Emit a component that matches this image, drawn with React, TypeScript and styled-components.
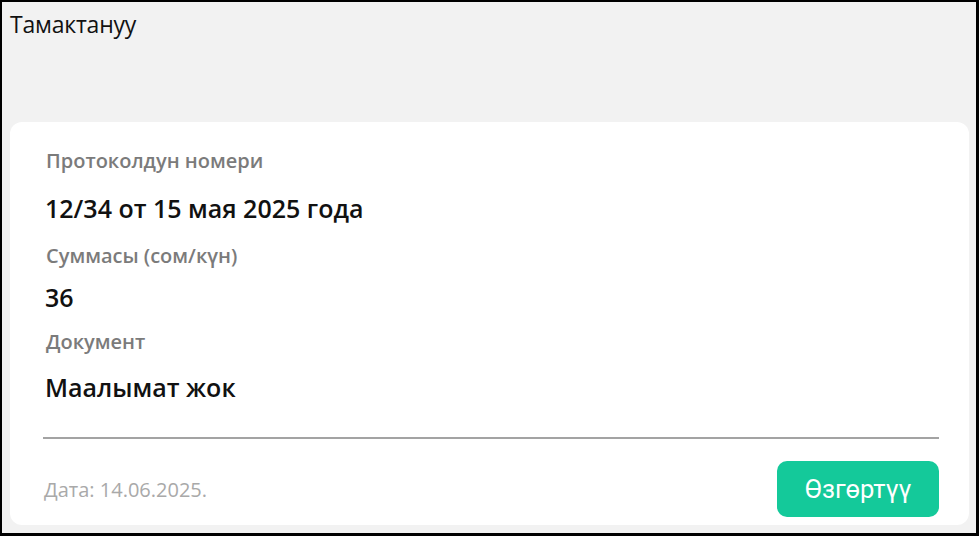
import React from "react";
import styled, { createGlobalStyle } from "styled-components";

const Global = createGlobalStyle`
  html, body { margin: 0; padding: 0; background: #ffffff; }
  * { box-sizing: border-box; }
`;

const Frame = styled.div`
  width: 979px;
  height: 536px;
  background: #f2f2f2;
  border-style: solid;
  border-color: #000;
  border-width: 2px 3px 3px 2px;
  display: flex;
  flex-direction: column;
  padding: 0 7px 0 8px;
  font-family: "Open Sans", "Noto Sans", sans-serif;
`;

const Title = styled.div`
  font-family: "Open Sans", sans-serif;
  font-size: 23px;
  color: #111;
  height: 120px;
  padding-top: 8px;
  line-height: 28px;
  letter-spacing: -0.2px;
`;

const Card = styled.div`
  background: #fff;
  border-radius: 12px;
  padding: 26px 30px 8px 36px;
  display: flex;
  flex-direction: column;
`;

const Label = styled.div<{ $gap: number }>`
  font-family: "Open Sans", sans-serif;
  font-weight: 600;
  font-size: 20px;
  line-height: 26px;
  color: #7b7b7b;
  margin-bottom: ${(p) => p.$gap}px;
`;

const Value = styled.div<{ $gap: number }>`
  font-family: "Open Sans", sans-serif;
  font-weight: 600;
  font-size: 25px;
  line-height: 32px;
  color: #111;
  margin-left: -1px;
  margin-bottom: ${(p) => p.$gap}px;
`;

const Divider = styled.hr`
  border: none;
  height: 2px;
  background: #a3a3a3;
  margin: 0 0 0 -3px;
`;

const Footer = styled.div`
  display: flex;
  justify-content: space-between;
  align-items: center;
  padding-top: 22px;
  margin-left: -2px;
`;

const DateText = styled.span`
  font-family: "Open Sans", sans-serif;
  font-size: 20px;
  color: #a9a9a9;
`;

const Button = styled.button`
  width: 162px;
  height: 56px;
  border: none;
  border-radius: 10px;
  background: #14c99a;
  color: #fff;
  font-family: "Roboto", sans-serif;
  font-size: 25.5px;
  cursor: pointer;
`;

export default function App() {
  return (
    <>
      <Global />
      <Frame>
        <Title>Тамактануу</Title>
        <Card>
          <Label $gap={18}>Протоколдун номери</Label>
          <Value $gap={19}>12/34 от 15 мая 2025 года</Value>
          <Label $gap={12}>Суммасы (сом/күн)</Label>
          <Value $gap={16}>36</Value>
          <Label $gap={16}>Документ</Label>
          <Value $gap={34}>Маалымат жок</Value>
          <Divider />
          <Footer>
            <DateText>Дата: 14.06.2025.</DateText>
            <Button>Өзгөртүү</Button>
          </Footer>
        </Card>
      </Frame>
    </>
  );
}
